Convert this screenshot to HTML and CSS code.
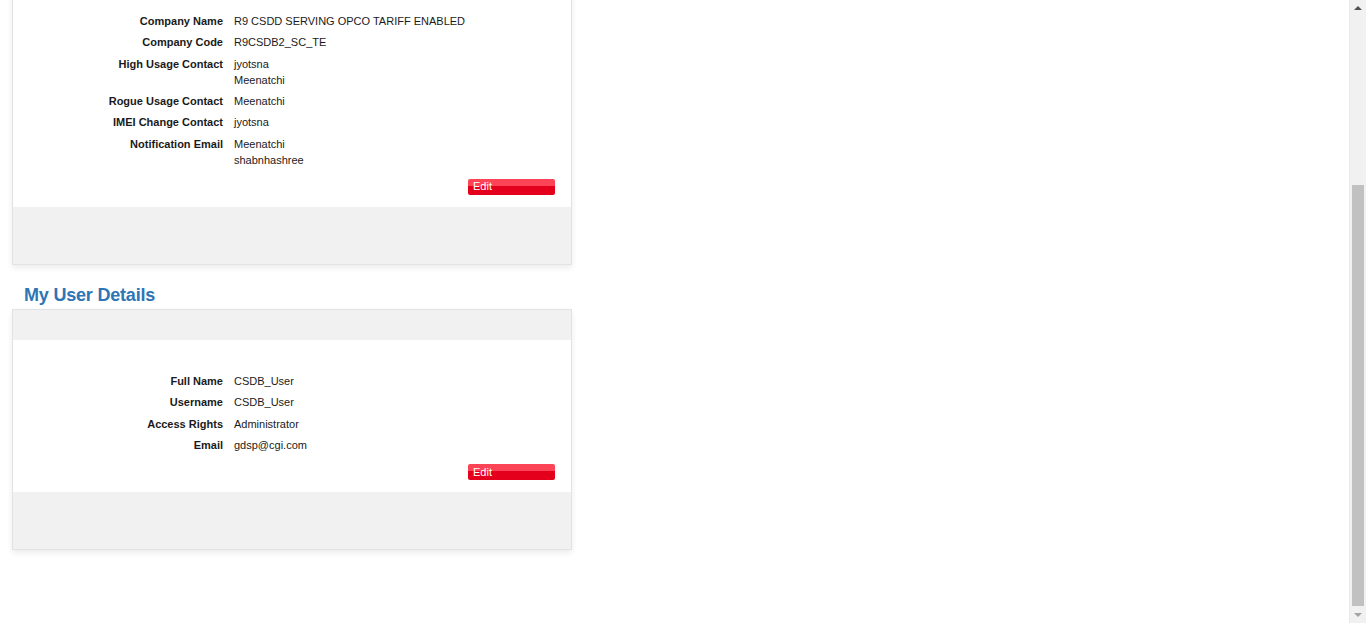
FILE: index.html
```html
<!DOCTYPE html>
<html lang="en">
<head>
<meta charset="utf-8">
<title>My Details</title>
<link rel="stylesheet" href="styles.css">
</head>
<body>
<div class="page">
  <div class="top-area"></div>
  <div class="card">
    <div class="card-head"></div>
    <div class="card-body">
      <dl class="details">
        <dt>Company Name</dt><dd>R9 CSDD SERVING OPCO TARIFF ENABLED</dd>
        <dt>Company Code</dt><dd>R9CSDB2_SC_TE</dd>
        <dt>High Usage Contact</dt><dd>jyotsna<br>Meenatchi</dd>
        <dt>Rogue Usage Contact</dt><dd>Meenatchi</dd>
        <dt>IMEI Change Contact</dt><dd>jyotsna</dd>
        <dt>Notification Email</dt><dd>Meenatchi<br>shabnhashree</dd>
      </dl>
      <div class="actions"><button class="btn-edit" type="button">Edit</button></div>
    </div>
    <div class="card-foot"></div>
  </div>

  <h2 class="section-title">My User Details</h2>
  <div class="card">
    <div class="card-head"></div>
    <div class="card-body">
      <dl class="details">
        <dt>Full Name</dt><dd>CSDB_User</dd>
        <dt>Username</dt><dd>CSDB_User</dd>
        <dt>Access Rights</dt><dd>Administrator</dd>
        <dt>Email</dt><dd>gdsp@cgi.com</dd>
      </dl>
      <div class="actions"><button class="btn-edit" type="button">Edit</button></div>
    </div>
    <div class="card-foot"></div>
  </div>
</div>
<div class="scrollbar" aria-hidden="true">
  <span class="sb-arrow sb-up"></span>
  <span class="sb-thumb"></span>
  <span class="sb-arrow sb-down"></span>
</div>
<script src="app.js"></script>
</body>
</html>
```

FILE: styles.css
```css
html, body {
  margin: 0;
  padding: 0;
  background: #fff;
}
body {
  font-family: "Liberation Sans", Arial, sans-serif;
  font-size: 11px;
  color: #1a1a1a;
}
.page {
  padding: 0 0 73px 12px;
  width: 560px;
}
.top-area {
  height: 180px;
}
.section-title {
  margin: 0;
  height: 44px;
  box-sizing: border-box;
  display: flex;
  align-items: flex-end;
  padding: 0 0 3px 12px;
  font-size: 18px;
  font-weight: bold;
  line-height: 22px;
  letter-spacing: -0.2px;
  color: #2e75b6;
}
.card {
  border: 1px solid #e2e2e2;
  background: #fff;
  box-shadow: 0 3px 6px rgba(0, 0, 0, 0.08);
}
.card-head {
  height: 30px;
  background: #f1f1f1;
}
.card-body {
  padding: 30px 16px 12px 0;
}
.card-foot {
  height: 57px;
  background: #f1f1f1;
}
.details {
  margin: 0;
  display: grid;
  grid-template-columns: 210px 1fr;
  column-gap: 11px;
  line-height: 16px;
}
.details dt {
  margin: 0;
  font-weight: bold;
  text-align: right;
  padding: 3px 0 2.33px;
}
.details dd {
  margin: 0;
  padding: 3px 0 2.33px;
}
.actions {
  display: flex;
  justify-content: flex-end;
  padding-top: 9px;
}
.btn-edit {
  width: 87px;
  height: 16px;
  border: 0;
  border-radius: 2px;
  padding: 0 0 0 5px;
  text-align: left;
  font-family: "Liberation Sans", Arial, sans-serif;
  font-size: 11px;
  line-height: 15px;
  color: #fff;
  background: linear-gradient(to bottom, #fd4457 0%, #fd4457 44%, #e4001c 44%, #e4001c 100%);
  cursor: pointer;
}

/* drawn window scrollbar (overlay) */
.scrollbar {
  position: fixed;
  top: 0;
  right: 0;
  width: 17px;
  height: 100%;
  background: #f1f1f1;
  border-left: 1px solid #e9e9e9;
  box-sizing: border-box;
}
.sb-thumb {
  position: absolute;
  left: 2px;
  right: 2px;
  top: 185px;
  height: 421px;
  background: #c1c1c1;
}
.sb-arrow {
  position: absolute;
  left: 50%;
  width: 0;
  height: 0;
  margin-left: -4px;
  border-left: 4px solid transparent;
  border-right: 4px solid transparent;
}
.sb-up {
  top: 6px;
  border-bottom: 4px solid #505050;
}
.sb-down {
  bottom: 6px;
  border-top: 4px solid #a3a3a3;
}
```

FILE: app.js
```js
window.scrollTo(0, document.documentElement.scrollHeight);
```
